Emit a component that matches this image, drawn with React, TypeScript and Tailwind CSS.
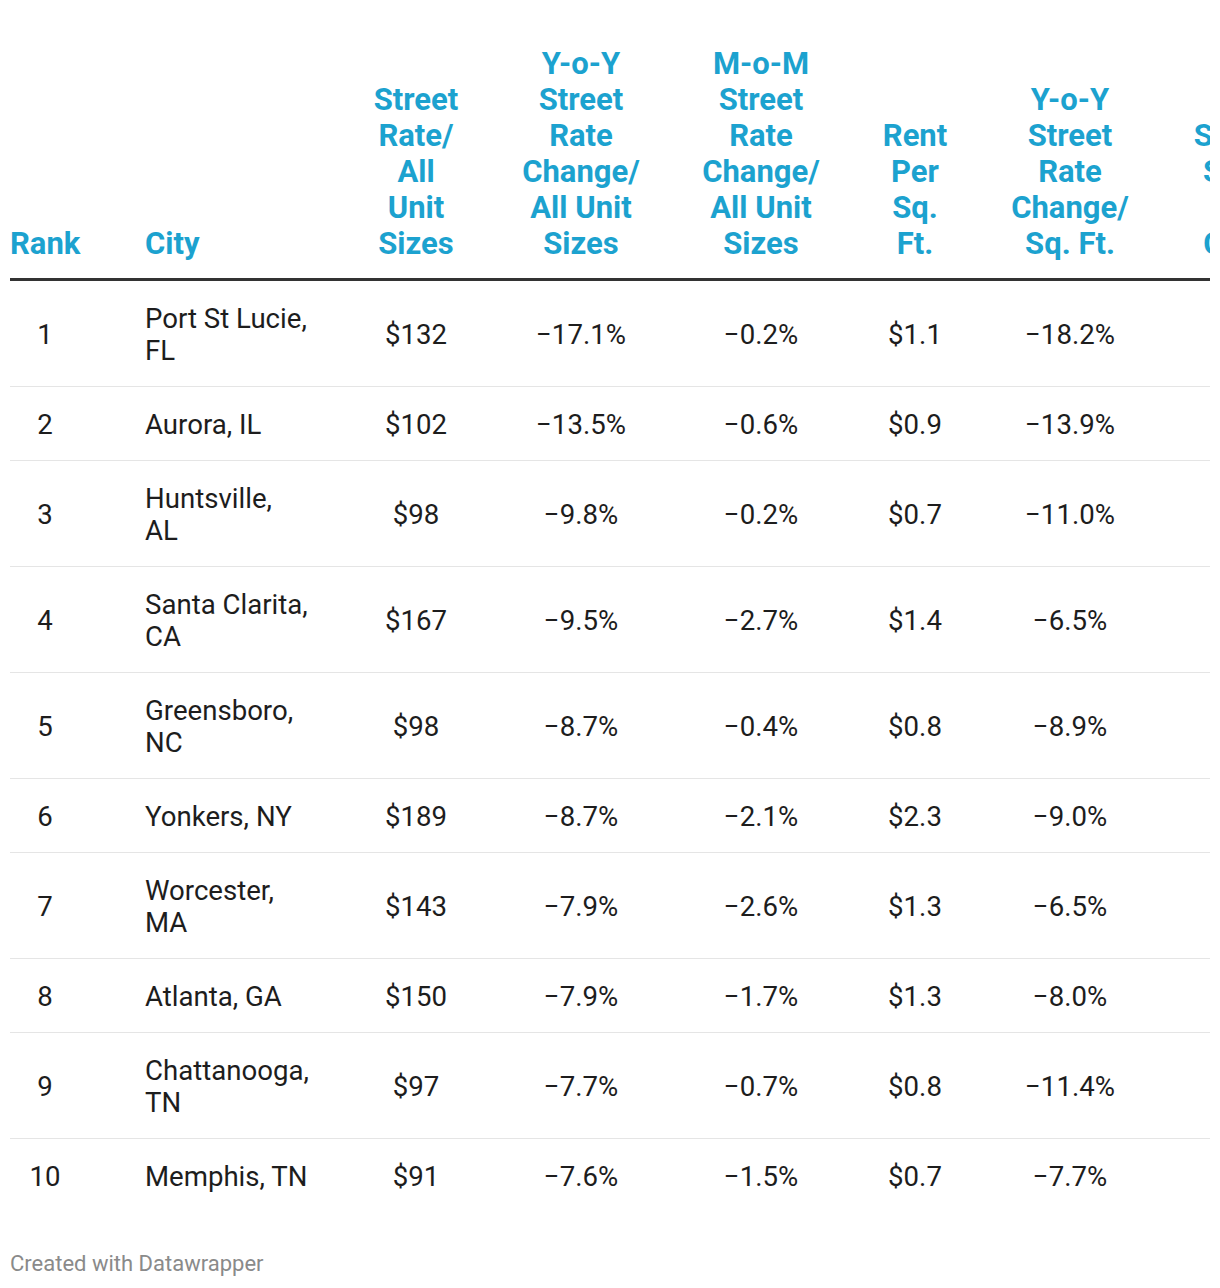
import React from "react";

const rows: [string, string[], string, string, string, string, string, string][] = [
  ["1", ["Port St Lucie,", "FL"], "$132", "\u221217.1%", "\u22120.2%", "$1.1", "\u221218.2%", "\u22125.1%"],
  ["2", ["Aurora, IL"], "$102", "\u221213.5%", "\u22120.6%", "$0.9", "\u221213.9%", "\u22124.2%"],
  ["3", ["Huntsville,", "AL"], "$98", "\u22129.8%", "\u22120.2%", "$0.7", "\u221211.0%", "\u22123.3%"],
  ["4", ["Santa Clarita,", "CA"], "$167", "\u22129.5%", "\u22122.7%", "$1.4", "\u22126.5%", "\u22122.9%"],
  ["5", ["Greensboro,", "NC"], "$98", "\u22128.7%", "\u22120.4%", "$0.8", "\u22128.9%", "\u22122.4%"],
  ["6", ["Yonkers, NY"], "$189", "\u22128.7%", "\u22122.1%", "$2.3", "\u22129.0%", "\u22122.0%"],
  ["7", ["Worcester,", "MA"], "$143", "\u22127.9%", "\u22122.6%", "$1.3", "\u22126.5%", "\u22121.8%"],
  ["8", ["Atlanta, GA"], "$150", "\u22127.9%", "\u22121.7%", "$1.3", "\u22128.0%", "\u22121.5%"],
  ["9", ["Chattanooga,", "TN"], "$97", "\u22127.7%", "\u22120.7%", "$0.8", "\u221211.4%", "\u22121.2%"],
  ["10", ["Memphis, TN"], "$91", "\u22127.6%", "\u22121.5%", "$0.7", "\u22127.7%", "\u22121.0%"],
];

const headers: string[][] = [
  ["Street", "Rate/", "All", "Unit", "Sizes"],
  ["Y-o-Y", "Street", "Rate", "Change/", "All Unit", "Sizes"],
  ["M-o-M", "Street", "Rate", "Change/", "All Unit", "Sizes"],
  ["Rent", "Per", "Sq.", "Ft."],
  ["Y-o-Y", "Street", "Rate", "Change/", "Sq. Ft."],
  ["Storage", "Sq. Ft.", "per", "Capita"],
];

const grid = "grid grid-cols-[70px_256px_160px_170px_190px_118px_192px_164px] w-[1320px]";

function Lines({ lines }: { lines: string[] }) {
  return (
    <>
      {lines.map((l, i) => (
        <div key={i} className="whitespace-nowrap">
          {l}
        </div>
      ))}
    </>
  );
}

export default function App() {
  return (
    <div
      className="bg-white w-[1220px] min-h-[1288px] pt-[46px]"
      style={{ fontFamily: "Roboto, 'Noto Sans', sans-serif" }}
    >
      <div className="ml-[10px] w-[1200px] overflow-hidden">
        <div className={`${grid} items-end border-b-[3px] border-[#333333] pb-[16px] text-[31px] leading-[36px] font-bold text-[#1ca2cf]`}>
          <div className="text-left">Rank</div>
          <div className="pl-[65px]">City</div>
          {headers.map((h, i) => (
            <div key={i} className="text-center">
              <Lines lines={h} />
            </div>
          ))}
        </div>
        {rows.map((r, ri) => (
          <div
            key={ri}
            className={`${grid} items-center pt-[22px] pb-[19px] text-[27.6px] leading-[32px] text-[#1d1d1d] ${
              ri < rows.length - 1 ? "border-b border-[#e5e5e5]" : ""
            }`}
          >
            <div className="text-center">{r[0]}</div>
            <div className="pl-[65px]">
              <Lines lines={r[1]} />
            </div>
            {r.slice(2).map((v, i) => (
              <div key={i} className="text-center">
                {v as string}
              </div>
            ))}
          </div>
        ))}
      </div>
      <div className="ml-[10px] mt-[37px] text-[22px] leading-[30px] text-[#8a8a8a]">
        Created with Datawrapper
      </div>
    </div>
  );
}
